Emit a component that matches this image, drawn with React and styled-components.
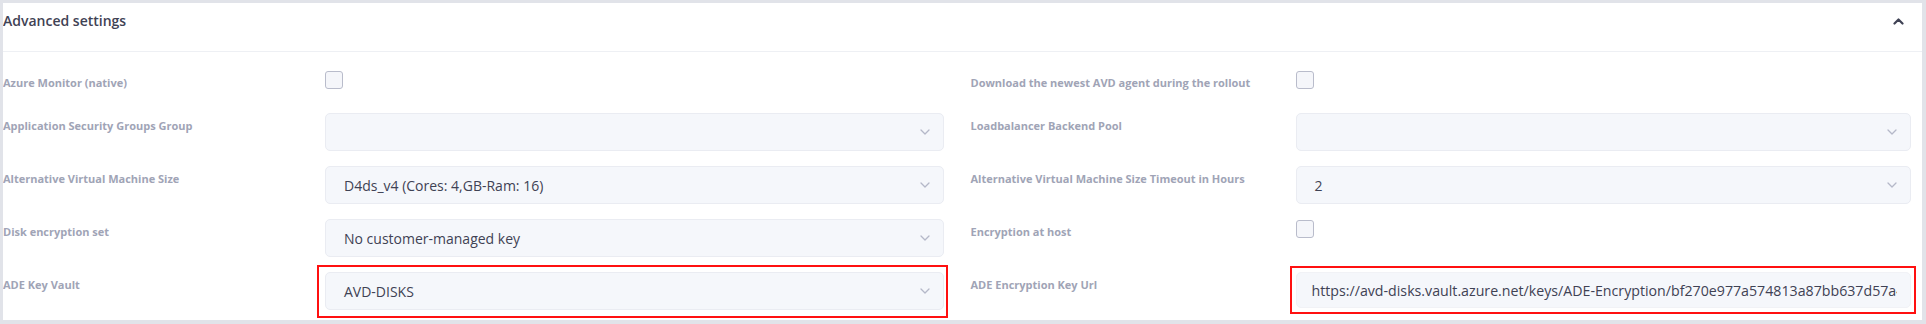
import styled, { createGlobalStyle } from "styled-components";

const GlobalStyle = createGlobalStyle`
  html, body {
    margin: 0;
    padding: 0;
    background: #e1e3e9;
  }
  * {
    box-sizing: border-box;
  }
`;

const KEY_URL =
  "https://avd-disks.vault.azure.net/keys/ADE-Encryption/bf270e977a574813a87bb637d57a4c1e";

const ChevronDown = () => (
  <svg width="10" height="6" viewBox="0 0 10 6" fill="none">
    <path d="M1 1l4 4 4-4" stroke="#b5b8c8" strokeWidth="1.3" strokeLinecap="round" strokeLinejoin="round" />
  </svg>
);

const ChevronUp = () => (
  <svg width="11" height="7" viewBox="0 0 11 7" fill="none">
    <path d="M1.5 5.5l4-4 4 4" stroke="#3f4254" strokeWidth="2.2" strokeLinecap="round" strokeLinejoin="round" />
  </svg>
);

const App = () => {
  return (
    <>
      <GlobalStyle />
      <Page>
        <Panel>
          <Header>
            <Title>Advanced settings</Title>
            <Toggle>
              <ChevronUp />
            </Toggle>
          </Header>
          <Body>
            <Row>
              <Field $labelWidth={322}>
                <Label>Azure Monitor (native)</Label>
                <Control>
                  <Checkbox />
                </Control>
              </Field>
              <Field $labelWidth={325}>
                <Label>Download the newest AVD agent during the rollout</Label>
                <Control>
                  <Checkbox />
                </Control>
              </Field>
            </Row>
            <Row>
              <Field $labelWidth={322}>
                <Label>Application Security Groups Group</Label>
                <Select>
                  <span />
                  <ChevronDown />
                </Select>
              </Field>
              <Field $labelWidth={325}>
                <Label>Loadbalancer Backend Pool</Label>
                <Select>
                  <span />
                  <ChevronDown />
                </Select>
              </Field>
            </Row>
            <Row>
              <Field $labelWidth={322}>
                <Label>Alternative Virtual Machine Size</Label>
                <Select>
                  <span>D4ds_v4 (Cores: 4,GB-Ram: 16)</span>
                  <ChevronDown />
                </Select>
              </Field>
              <Field $labelWidth={325}>
                <Label>Alternative Virtual Machine Size Timeout in Hours</Label>
                <Select>
                  <span>2</span>
                  <ChevronDown />
                </Select>
              </Field>
            </Row>
            <Row>
              <Field $labelWidth={322}>
                <Label>Disk encryption set</Label>
                <Select>
                  <span>No customer-managed key</span>
                  <ChevronDown />
                </Select>
              </Field>
              <Field $labelWidth={325}>
                <Label>Encryption at host</Label>
                <Control>
                  <Checkbox />
                </Control>
              </Field>
            </Row>
            <Row>
              <Field $labelWidth={322}>
                <Label>ADE Key Vault</Label>
                <Highlight $inset="-7px -4px -8px -8px">
                  <Select>
                    <span>AVD-DISKS</span>
                    <ChevronDown />
                  </Select>
                </Highlight>
              </Field>
              <Field $labelWidth={325}>
                <Label>ADE Encryption Key Url</Label>
                <Highlight $inset="-6px -5px -6px -6px">
                  <TextInput readOnly value={KEY_URL} />
                </Highlight>
              </Field>
            </Row>
          </Body>
        </Panel>
      </Page>
    </>
  );
};

const Page = styled.div`
  width: 1926px;
  height: 324px;
  padding: 3px 4px 4px 3px;
  background: #e1e3e9;
`;

const Panel = styled.section`
  height: 100%;
  background: #ffffff;
  font-family: "Open Sans", "Noto Sans", sans-serif;
  overflow: hidden;
`;

const Header = styled.div`
  height: 49px;
  display: flex;
  align-items: flex-start;
  justify-content: space-between;
  padding: 8px 18px 0 0;
  border-bottom: 1px solid #eef0f4;
`;

const Title = styled.h3`
  margin: 0;
  font-size: 14px;
  line-height: 20px;
  font-weight: 600;
  color: #3f4254;
`;

const Toggle = styled.span`
  display: flex;
  align-items: center;
  height: 20px;
`;

const Body = styled.div`
  display: flex;
  flex-direction: column;
  gap: 15px;
  padding: 18px 11px 0 0;
`;

const Row = styled.div`
  display: grid;
  grid-template-columns: 1fr 1fr;
  column-gap: 27px;
`;

const Field = styled.div`
  display: grid;
  grid-template-columns: ${p => p.$labelWidth}px 1fr;
  align-items: start;
`;

const Label = styled.label`
  padding-top: 5px;
  font-size: 11px;
  line-height: 16px;
  font-weight: 700;
  color: #a0a4b6;
`;

const Control = styled.div`
  min-height: 28px;
  padding-top: 1px;
`;

const Checkbox = styled.span`
  display: block;
  width: 18px;
  height: 18px;
  border: 1px solid #b9bccb;
  border-radius: 3px;
  background: #f5f6fa;
`;

const Select = styled.div`
  height: 38px;
  display: flex;
  align-items: center;
  justify-content: space-between;
  padding: 0 13px 0 18px;
  border: 1px solid #eaecf2;
  border-radius: 5px;
  background: #f5f7fb;
  font-size: 14px;
  color: #3f4254;
`;

const TextInput = styled.input`
  display: block;
  width: 100%;
  height: 36px;
  padding: 0 13px 0 15px;
  border: 1px solid #f1f2f6;
  border-radius: 5px;
  background: #f5f7fb;
  font-family: "Open Sans", "Noto Sans", sans-serif;
  font-size: 14.2px;
  color: #3f4254;
  outline: none;
`;

const Highlight = styled.div`
  position: relative;

  &::after {
    content: "";
    position: absolute;
    inset: ${p => p.$inset};
    border: 2px solid #ff1010;
    pointer-events: none;
  }
`;

export default App;
